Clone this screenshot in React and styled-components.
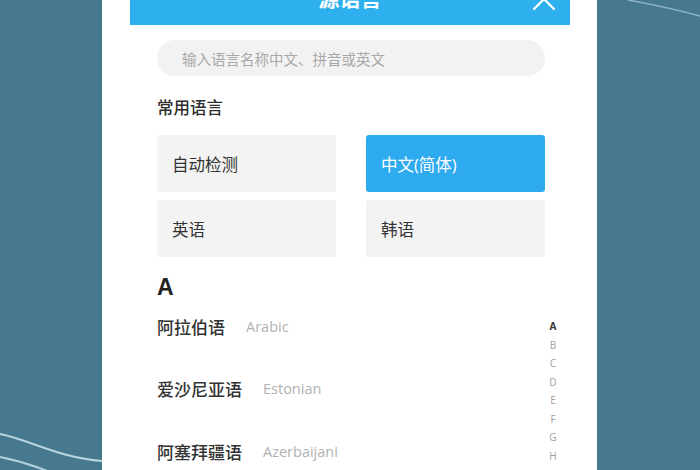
import React from 'react';
import styled, { createGlobalStyle } from 'styled-components';

const GlobalStyle = createGlobalStyle`
  html, body {
    margin: 0;
    padding: 0;
  }
  body {
    font-family: "Open Sans", "Noto Sans CJK SC", sans-serif;
    background: #46798f;
  }
`;

const Page = styled.div`
  position: relative;
  width: 700px;
  height: 470px;
  overflow: hidden;
  background: #46798f;
`;

const Decor = styled.svg`
  position: absolute;
  inset: 0;
  width: 700px;
  height: 470px;
  pointer-events: none;
`;

const Panel = styled.div`
  position: relative;
  width: 495px;
  height: 495px;
  margin: -25px 0 0 102px;
  padding: 0 27px 0 28px;
  box-sizing: border-box;
  background: #fff;
`;

const Header = styled.div`
  position: relative;
  height: 50px;
  box-sizing: border-box;
  padding-bottom: 7px;
  display: flex;
  align-items: center;
  justify-content: center;
  background: #2eb0ee;
  color: #fff;
  font-size: 21px;
  font-weight: 700;
`;

const CloseButton = styled.span`
  position: absolute;
  right: 15px;
  top: 13px;
  display: flex;
`;

const Body = styled.div`
  padding: 0 25px 0 27px;
`;

const Search = styled.div`
  height: 36px;
  margin-top: 15px;
  padding-left: 25px;
  display: flex;
  align-items: center;
  border-radius: 18px;
  background: #f2f2f2;
  color: #a8a8a8;
  font-size: 14.5px;
`;

const SectionTitle = styled.div`
  margin-top: 20px;
  line-height: 24px;
  font-size: 16.5px;
  font-weight: 500;
  color: #2e2e2e;
`;

const Grid = styled.div`
  margin-top: 15px;
  display: grid;
  grid-template-columns: 179px 179px;
  grid-auto-rows: 57px;
  column-gap: 30px;
  row-gap: 8px;
`;

const Card = styled.div`
  display: flex;
  align-items: center;
  padding-left: 15px;
  border-radius: 3px;
  font-size: 16.5px;
  background: ${(p) => (p.$active ? '#2eaaef' : '#f3f3f3')};
  color: ${(p) => (p.$active ? '#fff' : '#333')};
`;

const Letter = styled.div`
  margin-top: 15px;
  line-height: 30px;
  font-family: "Liberation Sans", Arial, sans-serif;
  font-size: 23px;
  font-weight: 700;
  color: #222;
`;

const List = styled.div`
  margin-top: 12px;
  display: flex;
  flex-direction: column;
  gap: 38.5px;
`;

const Row = styled.div`
  display: flex;
  align-items: center;
  height: 24px;
`;

const Name = styled.span`
  font-size: 17px;
  font-weight: 500;
  color: #333;
`;

const English = styled.span`
  margin-left: 21px;
  font-size: 14.5px;
  color: #b2b2b2;
`;

const IndexBar = styled.div`
  position: absolute;
  left: 445px;
  top: 342px;
  width: 12px;
  display: flex;
  flex-direction: column;
  align-items: center;
`;

const IndexLetter = styled.span`
  line-height: 18.5px;
  font-size: 10px;
  font-weight: ${(p) => (p.$current ? 700 : 400)};
  color: ${(p) => (p.$current ? '#333' : '#a0a0a0')};
`;

const common = [
  { label: '自动检测' },
  { label: '中文(简体)', active: true },
  { label: '英语' },
  { label: '韩语' },
];

const languages = [
  { name: '阿拉伯语', en: 'Arabic' },
  { name: '爱沙尼亚语', en: 'Estonian' },
  { name: '阿塞拜疆语', en: 'Azerbaijani' },
];

const letters = ['A', 'B', 'C', 'D', 'E', 'F', 'G', 'H'];

export default function App() {
  return (
    <Page>
      <GlobalStyle />
      <Decor viewBox="0 0 700 470">
        <path d="M0 434 C30 440 60 458 102 461" stroke="#cfe6ef" strokeWidth="2" fill="none" opacity="0.85" />
        <path d="M0 457 C20 461 35 466 50 472" stroke="#cfe6ef" strokeWidth="2" fill="none" opacity="0.8" />
        <path d="M628 0 C650 4 675 9 700 16" stroke="#a9cad8" strokeWidth="1.5" fill="none" opacity="0.7" />
      </Decor>
      <Panel>
        <Header>
          源语言
          <CloseButton>
            <svg width="22" height="22" viewBox="0 0 22 22">
              <path d="M1 1 L21 21 M21 1 L1 21" stroke="#fff" strokeWidth="2.2" strokeLinecap="round" />
            </svg>
          </CloseButton>
        </Header>
        <Body>
          <Search>输入语言名称中文、拼音或英文</Search>
          <SectionTitle>常用语言</SectionTitle>
          <Grid>
            {common.map((c) => (
              <Card key={c.label} $active={c.active}>{c.label}</Card>
            ))}
          </Grid>
          <Letter>A</Letter>
          <List>
            {languages.map((l) => (
              <Row key={l.en}>
                <Name>{l.name}</Name>
                <English>{l.en}</English>
              </Row>
            ))}
          </List>
        </Body>
        <IndexBar>
          {letters.map((l, i) => (
            <IndexLetter key={l} $current={i === 0}>{l}</IndexLetter>
          ))}
        </IndexBar>
      </Panel>
    </Page>
  );
}
